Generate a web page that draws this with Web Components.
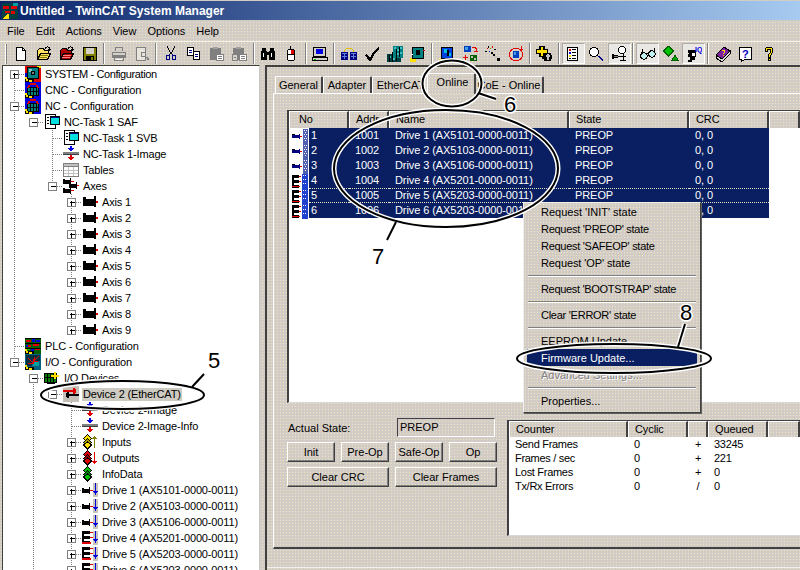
<!DOCTYPE html>
<html>
<head>
<meta charset="utf-8">
<title>TwinCAT System Manager</title>
<style>
  :root {
    --dither: radial-gradient(circle at 1.5px 1.5px, #e9e7bd 0, #e9e7bd .7px, transparent .9px) 0 0/3px 3px, #d3cbc6;
    --dither-light: radial-gradient(circle at 1px 1px, #fff 0, #fff .6px, transparent .8px) 0 0/2px 2px, #d8d4cc;
    --navy: radial-gradient(circle at 1px 1px, #1c3580 0, #1c3580 .4px, transparent .7px) 0 0/2px 2px, #0a1f62;
    --ui: "Liberation Sans", Arial, sans-serif;
  }
  html, body { margin: 0; padding: 0; background: #d4d0c8; }
  body { font: 11px var(--ui); color: #000; overflow: hidden; }
</style>
</head>
<body>
<tc-window>
  <title-bar>Untitled - TwinCAT System Manager</title-bar>
  <menu-bar>
    <span>File</span><span>Edit</span><span>Actions</span><span>View</span><span>Options</span><span>Help</span>
  </menu-bar>
  <tool-bar></tool-bar>
  <main-split>
    <tree-view slot="tree">
      <tree-row conn="start" exp="+" icon="sys" style="letter-spacing:-.4px">SYSTEM - Configuration</tree-row>
      <tree-row conn="full" icon="nc">CNC - Configuration</tree-row>
      <tree-row conn="full" exp="-" icon="nc">NC - Configuration</tree-row>
      <tree-row level="1" v="14" exp="-" icon="task">NC-Task 1 SAF</tree-row>
      <tree-row level="2" v="14" conn="full" icon="task">NC-Task 1 SVB</tree-row>
      <tree-row level="2" v="14" conn="full" icon="image">NC-Task 1-Image</tree-row>
      <tree-row level="2" v="14" conn="full" icon="tables">Tables</tree-row>
      <tree-row level="2" v="14" conn="half" exp="-" icon="axes">Axes</tree-row>
      <tree-row level="3" v="14" conn="full" exp="+" icon="axis">Axis 1</tree-row>
      <tree-row level="3" v="14" conn="full" exp="+" icon="axis">Axis 2</tree-row>
      <tree-row level="3" v="14" conn="full" exp="+" icon="axis">Axis 3</tree-row>
      <tree-row level="3" v="14" conn="full" exp="+" icon="axis">Axis 4</tree-row>
      <tree-row level="3" v="14" conn="full" exp="+" icon="axis">Axis 5</tree-row>
      <tree-row level="3" v="14" conn="full" exp="+" icon="axis">Axis 6</tree-row>
      <tree-row level="3" v="14" conn="full" exp="+" icon="axis">Axis 7</tree-row>
      <tree-row level="3" v="14" conn="full" exp="+" icon="axis">Axis 8</tree-row>
      <tree-row level="3" v="14" conn="half" exp="+" icon="axis">Axis 9</tree-row>
      <tree-row conn="full" icon="plc">PLC - Configuration</tree-row>
      <tree-row conn="half" exp="-" icon="io">I/O - Configuration</tree-row>
      <tree-row level="1" conn="start" exp="-" icon="iodev">I/O Devices</tree-row>
      <tree-row level="2" v="33" conn="half" exp="-" icon="device" sel>Device 2 (EtherCAT)</tree-row>
      <tree-row level="3" v="33" conn="full" icon="image">Device 2-Image</tree-row>
      <tree-row level="3" v="33" conn="full" icon="image">Device 2-Image-Info</tree-row>
      <tree-row level="3" v="33" conn="full" exp="+" icon="inputs">Inputs</tree-row>
      <tree-row level="3" v="33" conn="full" exp="+" icon="outputs">Outputs</tree-row>
      <tree-row level="3" v="33" conn="full" exp="+" icon="infodata">InfoData</tree-row>
      <tree-row level="3" v="33" conn="full" exp="+" icon="drive1">Drive 1 (AX5101-0000-0011)</tree-row>
      <tree-row level="3" v="33" conn="full" exp="+" icon="drive1">Drive 2 (AX5103-0000-0011)</tree-row>
      <tree-row level="3" v="33" conn="full" exp="+" icon="drive1">Drive 3 (AX5106-0000-0011)</tree-row>
      <tree-row level="3" v="33" conn="full" exp="+" icon="drive4">Drive 4 (AX5201-0000-0011)</tree-row>
      <tree-row level="3" v="33" conn="full" exp="+" icon="drive4">Drive 5 (AX5203-0000-0011)</tree-row>
      <tree-row level="3" v="33" conn="full" exp="+" icon="drive4">Drive 6 (AX5203-0000-0011)</tree-row>
    </tree-view>
    <right-pane slot="pane">
      <tab-strip>
        <tab-item style="width:48px">General</tab-item>
        <tab-item style="width:49px">Adapter</tab-item>
        <tab-item style="width:58px">EtherCAT</tab-item>
        <tab-item active>Online</tab-item>
        <tab-item style="width:69px">CoE - Online</tab-item>
      </tab-strip>
      <tab-page>
        <list-view style="height:293px">
          <list-row head style="--cols:60px 40px 180px 120px 80px 1fr">
            <span>&nbsp;No</span><span>Addr</span><span>Name</span><span>State</span><span>CRC</span><span></span>
          </list-row>
          <list-row sel><span><tc-icon name="row1"></tc-icon></span><span>1</span><span>1001</span><span>Drive 1 (AX5101-0000-0011)</span><span>PREOP</span><span>0, 0</span></list-row>
          <list-row sel><span><tc-icon name="row1"></tc-icon></span><span>2</span><span>1002</span><span>Drive 2 (AX5103-0000-0011)</span><span>PREOP</span><span>0, 0</span></list-row>
          <list-row sel><span><tc-icon name="row1"></tc-icon></span><span>3</span><span>1003</span><span>Drive 3 (AX5106-0000-0011)</span><span>PREOP</span><span>0, 0</span></list-row>
          <list-row sel><span><tc-icon name="row4"></tc-icon></span><span>4</span><span>1004</span><span>Drive 4 (AX5201-0000-0011)</span><span>PREOP</span><span>0, 0</span></list-row>
          <list-row sel focus><span><tc-icon name="row4"></tc-icon></span><span>5</span><span>1005</span><span>Drive 5 (AX5203-0000-0011)</span><span>PREOP</span><span>0, 0</span></list-row>
          <list-row sel><span><tc-icon name="row4"></tc-icon></span><span>6</span><span>1006</span><span>Drive 6 (AX5203-0000-0011)</span><span>PREOP</span><span>0, 0</span></list-row>
        </list-view>
        <control-row>
          <state-panel>
            <state-field label="Actual State:">PREOP</state-field>
            <push-btn>Init</push-btn><push-btn>Pre-Op</push-btn><push-btn>Safe-Op</push-btn><push-btn>Op</push-btn>
            <push-btn wide>Clear CRC</push-btn><push-btn wide>Clear Frames</push-btn>
          </state-panel>
          <list-view style="height:116px;flex:1">
            <list-row head small>
              <span>Counter</span><span>Cyclic</span><span></span><span>Queued</span><span></span>
            </list-row>
            <list-row small><span>Send Frames</span><span>0</span><span class="c">+</span><span>33245</span></list-row>
            <list-row small><span>Frames / sec</span><span>0</span><span class="c">+</span><span>221</span></list-row>
            <list-row small><span>Lost Frames</span><span>0</span><span class="c">+</span><span>0</span></list-row>
            <list-row small><span>Tx/Rx Errors</span><span>0</span><span class="c">/</span><span>0</span></list-row>
          </list-view>
        </control-row>
      </tab-page>
    </right-pane>
  </main-split>
  <context-menu>
    <menu-item>Request 'INIT' state</menu-item>
    <menu-item style="letter-spacing:-.28px">Request 'PREOP' state</menu-item>
    <menu-item style="letter-spacing:-.28px">Request 'SAFEOP' state</menu-item>
    <menu-item style="letter-spacing:-.1px">Request 'OP' state</menu-item>
    <menu-item sep></menu-item>
    <menu-item style="letter-spacing:-.32px">Request 'BOOTSTRAP' state</menu-item>
    <menu-item sep></menu-item>
    <menu-item style="letter-spacing:-.26px">Clear 'ERROR' state</menu-item>
    <menu-item sep></menu-item>
    <menu-item>EEPROM Update...</menu-item>
    <menu-item active>Firmware Update...</menu-item>
    <menu-item disabled>Advanced Settings...</menu-item>
    <menu-item sep></menu-item>
    <menu-item>Properties...</menu-item>
  </context-menu>
  <call-outs></call-outs>
</tc-window>

<script>
// small helpers for the pixel icons
const R = (c, ...n) => {
  let s = '';
  for (let i = 0; i < n.length; i += 4) s += `<rect x="${n[i]}" y="${n[i+1]}" width="${n[i+2]}" height="${n[i+3]}" fill="${c}"/>`;
  return s;
};
const P = (d, fill = 'none', stroke = '#000') => `<path d="${d}" fill="${fill}" stroke="${stroke}"/>`;
const motor = (x = 0, y = 0) => R('#000', x+1,y+3,3,3, x+1,y+5,11,7, x+12,y+2,2,11) + R('#e00000', x+14,y+7,3,2);
const small = (x, y, tail) => R('#000', x,y+1,2,1, x,y+2,7,4, x+7,y,1,7) + R(tail, x+8,y+3,3,1);
const stack = (a, b) => P('M5.5 .5l4 4-4 4-4-4z', a) + P('M5.5 4.5l4 4-4 4-4-4z', b) + P('M5.5 8l4 3-4 4-4-4z', a);
const corner = R('#000',0,13,9,3) + R('#ffe000',1,13,2,2,4,14,3,2) + R('#ffe000',0,11,2,2);
const config = (bg, body) => R(bg,0,0,16,16) + body + corner;
const motorBody = R('#000',2,5,12,9) + R('#008080',3,6,10,7) + R('#000',5,6,1,7,8,6,1,7,11,6,1,7,3,9,10,1) +
  R('#e00000',5,1,6,2,3,3,2,2,11,3,2,2,2,5,2,1,12,5,2,1);
const folder = (fill) => P('M1.5 13.5v-9l2-2h4l1 2h4v3', fill) + P('M1.5 13.5l3-6h10l-3 6z', fill);
const arrowUp = P('M9 3c1-2 3-3 5-1', 'none') + R('#000',13,1,1,4,12,3,3,1);
const page = (x, y) => R('#000',x,y,7,9) + R('#fff',x+1,y+1,5,7) + R('#000080',x+2,y+3,3,1,x+2,y+5,3,1);
const clip = (c, c2) => R(c,1,2,11,12) + R(c2,4,1,5,2) + R('#fff',7,8,8,7) + R(c,7,8,8,1,7,8,1,7,14,8,1,7,7,14,8,1,9,10,4,1,9,12,4,1);
const ICONS = {
  // tree
  sys: config('#e00000', R('#0000d0',0,7,5,5) + R('#fff200',12,0,4,2) + R('#000',2,1,12,12) + R('#008080',3,2,10,10) + R('#80c0c0',4,3,3,3) + R('#000',6,5,4,4) + R('#808080',7,6,2,2)),
  nc: config('#0000e0', motorBody),
  plc: config('#006000', R('#000',0,0,16,1,0,5,16,1,0,10,16,1) + R('#e00000',1,2,5,2,8,6,6,2,3,7,3,2,10,11,5,1) + R('#0000e0',7,1,3,3,11,2,4,2,1,7,2,2,6,11,3,2) + R('#00c000',1,11,4,1)),
  io: config('#006080', R('#003040',1,1,14,6,1,7,6,5) + R('#00a0a0',8,8,6,4) + P('M3 4l5 5M3 9h5V5','none','#e00000') + P('M14 2L9 7M9 3v4h4','none','#e00000')),
  task: R('#000',1,0,11,15) + R('#fff',2,1,9,13) + R('#000',3,3,2,1,3,6,2,1,3,9,2,1) + R('#000',6,2,10,9) + R('#00e0e0',7,3,8,7) + R('#000080',7,3,8,1),
  image: R('#0000e0',7,0,2,3,5,2,6,1,6,3,4,1,7,4,2,1) + R('#808080',0,6,16,3) + R('#404040',0,8,16,1) + R('#e00000',7,9,2,3,5,11,6,1,6,12,4,1,7,13,2,1),
  tables: R('#808080',0,1,16,14) + R('#fff',1,5,14,9) + R('#c0c0c0',1,2,14,2,5,5,1,9,10,5,1,9,1,8,14,1,1,11,14,1),
  axes: small(0,0,'#e00000') + small(6,4,'#e00000') + small(0,9,'#e00000'),
  axis: motor(),
  iodev: R('#000',0,3,13,10) + R('#008000',1,4,11,8) + R('#000',3,3,1,10,6,3,1,10,9,3,1,10,0,7,13,1) + R('#ffe000',10,2,2,7,7,5,8,2) + R('#000',3,13,8,1),
  device: R('#c4c0b8',0,0,16,16) + R('#e00000',0,4,12,2,10,2,2,6,12,3,1,4) + R('#000',4,8,12,2,4,6,2,6,3,7,1,4),
  inputs: stack('#ffe000','#b0a000') + R('#808000',12,2,1,12,11,3,3,1,10,4,5,1),
  outputs: stack('#e00000','#900000') + R('#e00000',12,2,1,12,11,12,3,1,10,11,5,1),
  infodata: stack('#00c000','#008000'),
  drive1: R('#c8c4bc',11,1,5,14) + small(0,5,'#e00000') + R('#0000e0',13,1,1,12,12,10,3,1,11,9,5,1),
  drive4: R('#c8c4bc',11,1,5,14) + R('#000',0,1,2,13,2,1,6,3,2,6,6,3,2,11,6,3) + R('#e00000',8,2,3,1,8,7,3,1,0,12,9,2) + R('#0000e0',13,1,1,12,12,10,3,1,11,9,5,1),
  // list
  row1: R('#000080',0,6,7,3,7,5,1,5) + R('#000',0,5,3,1) + R('#e00000',8,7,2,1) + R('#5060b0',11,0,5,15) + R('#fff',12,1,1,1,14,1,1,1,12,5,1,1,14,5,1,1,12,9,1,1,14,9,1,1,13,3,1,1,13,7,1,1,13,11,1,1),
  row4: R('#000',0,1,2,13,2,1,5,3,2,6,5,3,2,11,5,3) + R('#e00000',7,2,2,1,7,7,2,1,0,12,8,1) + R('#2040d0',10,0,6,15) + R('#fff',11,1,1,1,13,1,1,1,11,5,1,1,13,5,1,1,11,9,1,1,13,9,1,1),
  // toolbar
  doc: P('M3.5 1.5h6l3 3v10h-9z', '#fff') + P('M9.5 1.5v3h3'),
  open: folder('#ffe060') + R('#808000',4,9,8,1,3,11,8,1) + arrowUp,
  openred: folder('#b00000') + R('#ff8080',4,9,8,1,3,11,8,1) + arrowUp,
  save: R('#000',1,1,14,14) + R('#808000',2,2,12,12) + R('#d4d0c8',4,2,8,6) + R('#000',4,10,8,4) + R('#808000',9,11,2,3),
  print: R('#808080',4,1,8,4,1,6,14,6,3,12,10,3) + R('#d4d0c8',5,2,6,3,2,7,12,2,4,12,8,2) + R('#fff',5,13,6,1),
  preview: R('#808080',2,1,10,14) + R('#e8e4dc',3,2,8,12) + R('#808080',7,6,5,1,7,6,1,5,11,6,1,5,7,10,5,1,12,11,2,1,13,12,2,2),
  cut: R('#000',4,0,1,2,5,2,1,2,6,4,1,2,7,6,2,2,11,0,1,2,10,2,1,2,9,4,1,2) + P('M3.5 9.5h3v4h-3zM9.5 9.5h3v4h-3z','none','#000080') + R('#000080',6,8,1,2,9,8,1,2),
  copy: page(1,1) + page(7,5),
  paste1: clip('#808080','#a0a0a0'),
  paste2: clip('#808080','#a0a0a0') + R('#808080',0,8,6,7) + R('#d4d0c8',1,9,4,5) + R('#808080',2,11,2,1),
  binoc: R('#000',2,2,4,3,10,2,4,3,1,5,6,9,9,5,6,9,6,6,4,3) + R('#fff',3,7,1,4,11,7,1,4),
  mouse: R('#000',7,0,1,3,5,3,6,1,4,4,1,10,11,4,1,10,5,14,6,1,4,8,8,1) + R('#fff',5,4,6,4,5,9,6,5) + R('#e00000',8,4,3,4),
  monitor: R('#000',1,1,13,10) + R('#d4d0c8',2,2,11,8) + R('#0000e0',4,3,7,5) + R('#000',0,11,16,4) + R('#d4d0c8',1,12,14,2) + R('#00c000',2,13,2,1),
  link: P('M3 6c2-5 8-5 10 0','none','#e0c000') + R('#000080',0,6,7,8,9,6,7,8) + R('#6080e0',1,7,5,1,1,10,5,1,10,7,5,1,10,10,5,1,3,7,1,6,12,7,1,6),
  check: `<path d="M1 9l2-1 3 4c2-5 5-8 9-11l0 2c-3 3-6 7-8 12H5z" fill="#000"/>`,
  netgrid: R('#004040',0,8,14,8) + R('#008080',6,0,10,12) + R('#40c0c0',7,1,2,2,10,3,2,2,13,1,2,2,2,10,2,2,6,12,2,2,10,7,2,2,13,6,2,2) + R('#000',2,9,1,7,5,6,1,10,9,3,1,12,12,1,1,10),
  tool: R('#ffe000',0,12,6,4) + R('#000',2,1,12,12) + R('#008080',3,2,10,10) + R('#000',6,4,4,5) + R('#e00000',13,4,2,1) + R('#fff',1,8,2,1),
  globe: R('#ffe000',0,13,6,3) + R('#000',2,1,12,12) + R('#0040e0',3,2,10,10) + R('#00c0e0',5,3,3,4,9,7,3,3) + R('#000',8,4,2,6),
  swap: R('#0040c0',2,0,7,6) + R('#40a0e0',3,1,3,3) + P('M10 1c3 0 5 1 5 4','none','#e00000') + R('#e00000',12,5,4,1,3,9,1,5,1,11,5,1) + R('#006000',8,9,7,6) + R('#c0c0c0',9,10,2,2,12,12,2,2),
  wand: R('#000',6,6,2,2,8,8,2,2) + R('#c0c0c0',10,10,2,2) + R('#000',12,12,3,3) + R('#e00000',2,2,1,1,7,0,1,2) + R('#0000e0',4,5,1,1) + R('#000',0,5,2,1,3,0,1,2,9,3,2,1) + R('#808000',5,2,1,1),
  target: `<circle cx="8" cy="8.5" r="6.5" fill="none" stroke="#e00000"/>` + R('#0040c0',5,5,6,7) + R('#40a0e0',6,6,2,3) + R('#e00000',13,0,1,5,11,3,4,1),
  plus: R('#000',3,0,6,11,0,3,12,5,8,7,7,8,6,9,10,4) + R('#ffe000',5,1,2,9,1,4,10,3) + R('#c0c0c0',10,9,4,2,11,8,2,6),
  listview: R('#000',2,1,11,14) + R('#fff',3,2,9,12) + R('#e00000',4,3,2,2) + R('#0000e0',4,6,2,2) + R('#ffe000',4,9,2,2) + R('#000',7,3,4,1,7,6,4,1,7,9,4,1,7,12,4,1,4,12,2,1),
  magnify: `<circle cx="6" cy="6" r="4.5" fill="#fff" stroke="#000"/>` + P('M10 10l5 5','none','#000080') + P('M11 10l4 4','none','#000080'),
  motorhead: `<circle cx="11" cy="4" r="3.5" fill="#fff" stroke="#000"/>` + R('#000',1,8,2,5,3,9,4,3,7,10,8,1,12,7,1,8,9,14,6,1) + R('#808080',3,10,4,1),
  glasses: `<circle cx="4" cy="10" r="3.2" fill="#c0f0f0" stroke="#000"/><circle cx="12" cy="8" r="3.2" fill="#c0f0f0" stroke="#000"/>` + P('M7 8l2-1M1 9l2-6M15 6l-1-4'),
  diamond: P('M5.5 0l5 5-5 5-5-5z','#00c000','#006000') + P('M12 9l3 5H9z','#00a000','#006000'),
  head: R('#000',2,4,8,7,4,11,5,3,2,14,4,2) + R('#fff',6,7,3,3,2,7,1,1) + `<text x="9" y="6" font-family="Liberation Sans" font-size="7" font-weight="700" fill="#0000e0">IQ</text>`,
  book: `<path d="M1 9l8-8 6 4-8 8z" fill="#8020a0" stroke="#000"/><path d="M1 9v3l6 4 8-8V5l-8 8z" fill="#d8d8d8" stroke="#000"/>` + R('#ffe000',7,4,3,1,9,5,1,2,8,7,1,1,8,9,1,1),
  helpbub: P('M1.5 1.5h12v12h-7l-3 2v-2h-2z','#fff') + `<text x="4" y="11.5" font-family="Liberation Sans" font-size="11" font-weight="700" fill="#0000c0">?</text>`,
  help: P('M4 5c0-5 8-5 8 0 0 3-3 3-3 6H7c0-4 3-4 3-6 0-2-4-2-4 0z','#ffe000') + R('#000',7,12,3,3) + R('#ffe000',8,13,1,1)
};

class TcIcon extends HTMLElement {
  constructor() {
    super();
    this.attachShadow({ mode: 'open' });
  }
  connectedCallback() {
    this.shadowRoot.innerHTML = `<style>:host{display:inline-block;width:16px;height:16px;flex:none}svg{display:block;shape-rendering:crispEdges}</style>
      <svg width="16" height="16" viewBox="0 0 16 16">${ICONS[this.getAttribute('name')] || ''}</svg>`;
  }
}
customElements.define('tc-icon', TcIcon);

class TcWindow extends HTMLElement {
  constructor() {
    super();
    this.attachShadow({ mode: 'open' }).innerHTML = `<style>
      :host{display:flex;flex-direction:column;position:relative;width:800px;height:570px;overflow:hidden;background:var(--dither)}
    </style><slot></slot>`;
  }
}
customElements.define('tc-window', TcWindow);

class TitleBar extends HTMLElement {
  constructor() {
    super();
    this.attachShadow({ mode: 'open' }).innerHTML = `<style>
      :host{display:flex;align-items:center;gap:2px;height:19px;margin-top:1px;padding-left:2px;flex:none;
        background:linear-gradient(90deg,#0a246a,#a6caf0);color:#fff;font:bold 12px var(--ui)}
    </style>
    <svg width="16" height="16" viewBox="0 0 14 14" shape-rendering="crispEdges">
      <rect width="14" height="14" fill="#004040"/><path d="M0 14l6-5v5z" fill="#ffe000"/><rect x="10" width="4" height="3" fill="#00a0a0"/>
      <path d="M1 3h5v2H1zM8 3h5v2H8zM3 7h4v2H3zM8 7h3v3H8z" fill="#e00000"/>
    </svg><slot></slot>`;
  }
}
customElements.define('title-bar', TitleBar);

class MenuBar extends HTMLElement {
  constructor() {
    super();
    this.attachShadow({ mode: 'open' }).innerHTML = `<style>
      :host{display:flex;align-items:center;height:21px;flex:none;padding-left:1.5px;color:#000}
      ::slotted(span){padding:0 5.5px}
    </style><slot></slot>`;
  }
}
customElements.define('menu-bar', MenuBar);

const TOOLS = 'doc open openred save | print preview | cut copy paste1 paste2 | binoc mouse | monitor | link check netgrid tool | globe swap wand target | plus | *listview magnify *motorhead | *glasses diamond *head | book helpbub help';

class ToolBar extends HTMLElement {
  constructor() {
    super();
    const cells = TOOLS.split(' ').map(t => t === '|' ? '<i></i>' :
      `<b class="${t[0] === '*' ? 'on' : ''}"><tc-icon name="${t.replace('*', '')}"></tc-icon></b>`).join('');
    this.attachShadow({ mode: 'open' }).innerHTML = `<style>
      :host{display:flex;align-items:center;height:24px;flex:none;padding-left:10.5px;position:relative;
        border-top:1px solid #f4f2ea;box-sizing:border-box}
      b{display:flex;align-items:center;justify-content:center;width:23px;height:21px;box-sizing:border-box}
      b.on{background:var(--dither-light);border:1px solid #f0eee6;border-color:#b0aca4 #fff #fff #b0aca4}
      i{width:5.75px;height:21px;display:flex;justify-content:center}
      i::before{content:"";width:1px;background:#808080;border-right:1px solid #fff}
      .grip{display:block;width:1px;background:#fff;border-right:1px solid #808080;height:20px;margin:0 3px 0 -6px}
    </style><span class="grip"></span>${cells}`;
  }
}
customElements.define('tool-bar', ToolBar);

class MainSplit extends HTMLElement {
  constructor() {
    super();
    this.attachShadow({ mode: 'open' }).innerHTML = `<style>
      :host{display:flex;flex:1;min-height:0;padding-left:2px;gap:5px}
    </style><slot name="tree"></slot><slot name="pane"></slot>`;
  }
}
customElements.define('main-split', MainSplit);

class TreeView extends HTMLElement {
  constructor() {
    super();
    this.attachShadow({ mode: 'open' }).innerHTML = `<style>
      :host{display:block;width:258px;flex:none;box-sizing:border-box;background:#fff;overflow:hidden;letter-spacing:-.15px;
        border-top:1px solid #404040;border-left:1px solid #404040;border-right:1px solid #c8c8c8}
    </style><slot></slot>`;
  }
}
customElements.define('tree-view', TreeView);

class TreeRow extends HTMLElement {
  constructor() {
    super();
    this.attachShadow({ mode: 'open' });
  }
  connectedCallback() {
    const level = +(this.getAttribute('level') || 0);
    const lead = 22 + 19 * level; // the tree content starts at x=3, so this puts the icon at 25
    const cx = 11.5 + 19 * level;
    const conn = this.getAttribute('conn');
    const exp = this.getAttribute('exp');
    const dot = 'stroke="#808080" stroke-dasharray="1 1"';
    let lines = '';
    (this.getAttribute('v') || '').split(' ').filter(Boolean).forEach(x => {
      lines += `<line x1="${x - 2.5}" x2="${x - 2.5}" y1="0" y2="16" ${dot}/>`;
    });
    if (conn === 'full') lines += `<line x1="${cx}" x2="${cx}" y1="0" y2="16" ${dot}/>`;
    if (conn === 'half') lines += `<line x1="${cx}" x2="${cx}" y1="0" y2="8" ${dot}/>`;
    if (conn === 'start') lines += `<line x1="${cx}" x2="${cx}" y1="8" y2="16" ${dot}/>`;
    lines += `<line x1="${cx}" x2="${lead}" y1="8.5" y2="8.5" ${dot}/>`;
    if (exp) {
      lines += `<rect x="${cx - 4}" y="4.5" width="8" height="8" fill="#fff" stroke="#808080"/>`;
      lines += `<path d="M${cx - 2} 8.5h5" stroke="#000"/>`;
      if (exp === '+') lines += `<path d="M${cx} 6.5v5" stroke="#000"/>`;
    }
    this.shadowRoot.innerHTML = `<style>
      :host{display:flex;align-items:center;height:16px;white-space:nowrap;line-height:16px}
      svg{flex:none;shape-rendering:crispEdges}
      .ic{display:flex}
      .tx{margin-left:3px;padding:0 1px;line-height:13px}
      :host([sel]) .ic{background:#c4c0b8}
      :host([sel]) .tx{background:radial-gradient(circle at 1px 1px,#e4e2d8 0,#e4e2d8 .5px,transparent .8px) 0 0/2px 2px,#c4c0b8}
    </style>
    <svg width="${lead}" height="16">${lines}</svg>
    <span class="ic"><tc-icon name="${this.getAttribute('icon')}"></tc-icon></span>
    <span class="tx"><slot></slot></span>`;
  }
}
customElements.define('tree-row', TreeRow);

class RightPane extends HTMLElement {
  constructor() {
    super();
    this.attachShadow({ mode: 'open' }).innerHTML = `<style>
      :host{display:flex;flex-direction:column;flex:1;min-width:0;box-sizing:border-box;padding:6px 0 0 6px;
        border-top:2px solid #404040;border-left:2px solid #404040;overflow:hidden}
      :host::after{content:"";flex:none;height:1px;margin:18px 0 0 -6px;background:#f0f0f0}
    </style><slot></slot>`;
  }
}
customElements.define('right-pane', RightPane);

class TabStrip extends HTMLElement {
  constructor() {
    super();
    this.attachShadow({ mode: 'open' }).innerHTML = `<style>
      :host{display:flex;align-items:flex-end;height:20px;flex:none;padding-left:2px;position:relative;z-index:1}
    </style><slot></slot>`;
  }
}
customElements.define('tab-strip', TabStrip);

class TabItem extends HTMLElement {
  constructor() {
    super();
    this.attachShadow({ mode: 'open' }).innerHTML = `<style>
      :host{display:flex;align-items:center;justify-content:center;flex:none;height:17px;box-sizing:border-box;
        background:var(--dither);border:1px solid #fff;border-bottom:0;border-right:2px solid #404040;border-radius:2px 2px 0 0;white-space:nowrap;overflow:hidden}
      :host([active]){height:21px;width:49px;margin:0 -1px -1px -3px;padding:0 0 5px 3px;z-index:1}
    </style><slot></slot>`;
  }
}
customElements.define('tab-item', TabItem);

class TabPage extends HTMLElement {
  constructor() {
    super();
    this.attachShadow({ mode: 'open' }).innerHTML = `<style>
      :host{display:block;height:456px;flex:none;box-sizing:border-box;padding:16px 0 0 13px;
        border-top:1px solid #fff;border-left:1px solid #fff;border-bottom:2px solid #404040}
    </style><slot></slot>`;
  }
}
customElements.define('tab-page', TabPage);

class ListView extends HTMLElement {
  constructor() {
    super();
    this.attachShadow({ mode: 'open' }).innerHTML = `<style>
      :host{display:block;box-sizing:border-box;background:#fff;overflow:hidden;letter-spacing:-.08px;
        border-top:1px solid #404040;border-left:2px solid #404040;border-bottom:1px solid #d8d8d8}
    </style><slot></slot>`;
  }
}
customElements.define('list-view', ListView);

class ListRow extends HTMLElement {
  constructor() {
    super();
    this.attachShadow({ mode: 'open' }).innerHTML = `<style>
      :host{display:grid;grid-template-columns:var(--cols,20px 40px 40px 180px 120px 80px 1fr);height:15px;white-space:nowrap}
      ::slotted(span){display:block;box-sizing:border-box;height:15px;line-height:13px;overflow:hidden;
        border-top:1px solid transparent;border-bottom:1px solid transparent;padding-left:6px}
      :host([sel]) ::slotted(span){color:#fff;background:var(--navy)}
      :host([sel]) ::slotted(span:first-child){background:none;padding:0 0 0 3px;overflow:visible}
      :host([sel]) ::slotted(span:nth-child(2)){padding-left:2px}
      :host([focus]) ::slotted(span:not(:first-child)){border-top:1px dotted #e8e4c8;border-bottom:1px dotted #e8e4c8}
      :host([head]){height:17px}
      :host([head]) ::slotted(span){height:17px;line-height:15px;background:var(--dither);color:#000;
        border:0;border-right:2px solid #404040;border-left:1px solid #fff;border-top:1px solid #fff;padding-left:6px}
      :host([small]){--cols:119px 60px 20px 60px 1fr;height:14px;letter-spacing:-.3px}
      :host([small][head]){height:16px;letter-spacing:-.1px}
      :host([small]) ::slotted(span){height:14px;line-height:12px}
      :host([small][head]) ::slotted(span){height:16px;line-height:14px}
      :host([small]) ::slotted(.c){padding:0;text-align:center}
    </style><slot></slot>`;
  }
}
customElements.define('list-row', ListRow);

class ControlRow extends HTMLElement {
  constructor() {
    super();
    this.attachShadow({ mode: 'open' }).innerHTML = `<style>
      :host{display:flex;align-items:flex-start;gap:10px;margin-top:17px}
    </style><slot></slot>`;
  }
}
customElements.define('control-row', ControlRow);

class StatePanel extends HTMLElement {
  constructor() {
    super();
    this.attachShadow({ mode: 'open' }).innerHTML = `<style>
      :host{display:grid;grid-template-columns:48px 48px 48px 48px;column-gap:6px;row-gap:5px;width:210px;flex:none;margin-top:-2px}
    </style><slot></slot>`;
  }
}
customElements.define('state-panel', StatePanel);

class StateField extends HTMLElement {
  constructor() {
    super();
    this.attachShadow({ mode: 'open' }).innerHTML = `<style>
      :host{grid-column:1 / -1;display:flex;justify-content:space-between;align-items:center;height:19px;padding:0 2px 0 1px}
      b{font-weight:400;box-sizing:border-box;width:98px;height:19px;line-height:16px;padding-left:2px;
        border:1px solid;border-color:#404040 #fff #fff #404040}
    </style><span></span><b><slot></slot></b>`;
    this.shadowRoot.querySelector('span').textContent = this.getAttribute('label');
  }
}
customElements.define('state-field', StateField);

class PushBtn extends HTMLElement {
  constructor() {
    super();
    this.attachShadow({ mode: 'open' }).innerHTML = `<style>
      :host{display:flex;align-items:center;justify-content:center;height:20px;box-sizing:border-box;background:var(--dither);
        border:1px solid;border-color:#fff #404040 #404040 #fff;box-shadow:inset -1px -1px 0 #808080}
      :host([wide]){grid-column:span 2}
    </style><slot></slot>`;
  }
}
customElements.define('push-btn', PushBtn);

class ContextMenu extends HTMLElement {
  constructor() {
    super();
    this.attachShadow({ mode: 'open' }).innerHTML = `<style>
      :host{position:absolute;left:523px;top:202px;width:178px;box-sizing:border-box;padding:0 3px 3px;z-index:3;background:var(--dither);
        border:1px solid;border-color:#f0f0f0 #404040 #404040 #f0f0f0;box-shadow:1px 1px 0 #606060}
    </style><slot></slot>`;
  }
}
customElements.define('context-menu', ContextMenu);

class MenuItem extends HTMLElement {
  constructor() {
    super();
    this.attachShadow({ mode: 'open' }).innerHTML = `<style>
      :host{display:flex;align-items:center;height:17px;padding-left:14px;white-space:nowrap}
      :host([sep]){height:9px;padding:0;margin:0 1px}
      :host([sep])::before{content:"";flex:1;height:0;border-top:1px solid #808080;border-bottom:1px solid #fff}
      :host([active]){background:var(--navy);color:#fff}
      :host([disabled]){color:#808080;text-shadow:1px 1px 0 #fff}
    </style><slot></slot>`;
  }
}
customElements.define('menu-item', MenuItem);

// the hand drawn ellipses and numbers that lie over the screenshot
class CallOuts extends HTMLElement {
  constructor() {
    super();
    const marks = [
      ['e', 122.5, 395, 81.5, 14], ['l', 192, 387, 204, 374], ['t', 208, 368, '5'],
      ['e', 452, 83.5, 29.5, 23], ['l', 478, 93, 496, 99], ['t', 504, 112, '6'],
      ['e', 446, 168.5, 112, 58.5], ['l', 396, 222, 387, 240], ['t', 372, 264, '7'],
      ['e', 614, 358.5, 97, 14.5], ['l', 685, 324, 678, 347], ['t', 680, 320, '8']
    ];
    const shape = (m, cls) => m[0] === 'e' ? `<ellipse cx="${m[1]}" cy="${m[2]}" rx="${m[3]}" ry="${m[4]}" class="${cls}"/>` :
      `<line x1="${m[1]}" y1="${m[2]}" x2="${m[3]}" y2="${m[4]}" class="${cls}"/>`;
    const halo = marks.filter(m => m[0] !== 't').map(m => shape(m, 'h')).join('');
    const ink = marks.map(m => m[0] === 't' ? `<text x="${m[1]}" y="${m[2]}">${m[3]}</text>` : shape(m, 'k')).join('');
    this.attachShadow({ mode: 'open' }).innerHTML = `<style>
      :host{position:absolute;left:0;top:0;width:800px;height:570px;z-index:4;pointer-events:none}
      svg{display:block}
      .h{fill:none;stroke:#fff;stroke-width:5}
      .k{fill:none;stroke:#000;stroke-width:2}
      text{font:22px "Liberation Sans",Arial,sans-serif;fill:#000;stroke:#fff;stroke-width:3px;paint-order:stroke}
    </style><svg width="800" height="570">${halo}${ink}</svg>`;
  }
}
customElements.define('call-outs', CallOuts);
</script>
</body>
</html>
